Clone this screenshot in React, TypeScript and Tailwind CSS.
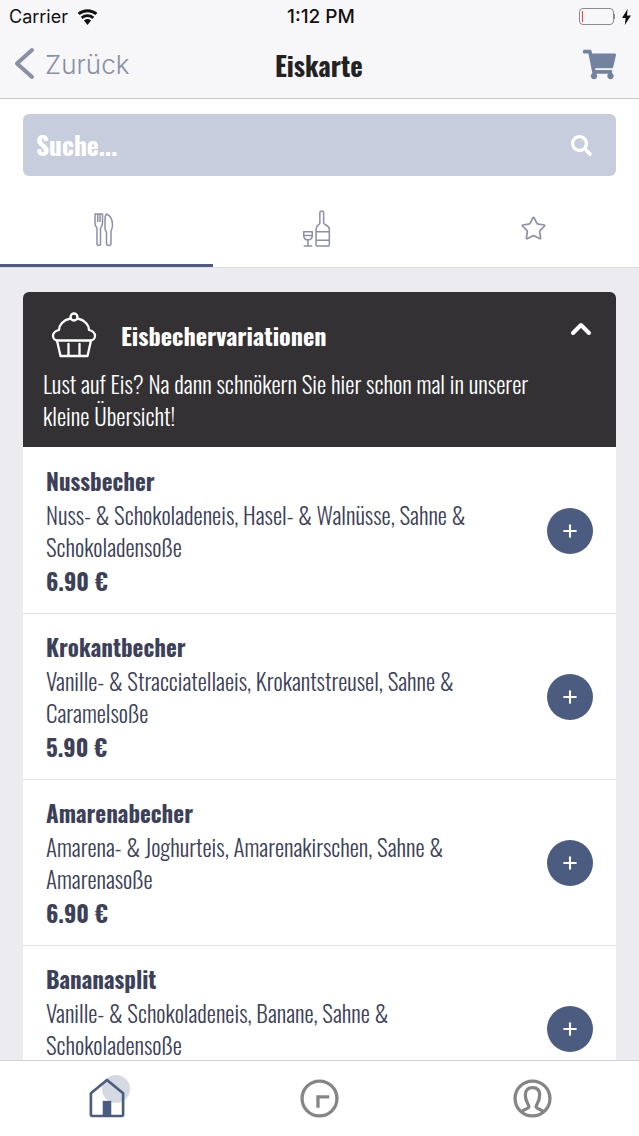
import { ChevronUp, Plus, Star } from "lucide-react";
import { FaSearch, FaShoppingCart } from "react-icons/fa";

const NARROW = "font-['Oswald','Liberation_Sans_Narrow','Liberation_Sans',sans-serif]";

const items = [
  { name: "Nussbecher", lines: ["Nuss- & Schokoladeneis, Hasel- & Walnüsse, Sahne &", "Schokoladensoße"], price: "6.90 €" },
  { name: "Krokantbecher", lines: ["Vanille- & Stracciatellaeis, Krokantstreusel, Sahne &", "Caramelsoße"], price: "5.90 €" },
  { name: "Amarenabecher", lines: ["Amarena- & Joghurteis, Amarenakirschen, Sahne &", "Amarenasoße"], price: "6.90 €" },
  { name: "Bananasplit", lines: ["Vanille- & Schokoladeneis, Banane, Sahne &", "Schokoladensoße"], price: "6.90 €" },
];

function StatusBar() {
  return (
    <div className="relative flex h-[33px] items-center justify-between pl-[9px] pr-[8px] font-['Inter',sans-serif] text-[18px] text-[#111]">
      <div className="flex items-center gap-[9px]">
        <span>Carrier</span>
        <svg width="21" height="16" viewBox="0 0 20 15" fill="#111">
          <path d="M10 15 6.6 10.8a5.4 5.4 0 0 1 6.8 0z" />
          <path d="M5.3 9.3 3.6 7.2a10 10 0 0 1 12.8 0l-1.700 2.100a7.400 7.400 0 0 0-9.400 0z" />
          <path d="M2.400 5.700.6 3.500a14.800 14.800 0 0 1 18.800 0l-1.800 2.200a12 12 0 0 0-15.200 0z" />
        </svg>
      </div>
      <span className="absolute left-[287px] top-[3px] text-[19px] font-medium">1:12 PM</span>
      <div className="flex items-center gap-[7px]">
        <div className="flex items-center">
          <div className="flex h-[17px] w-[35px] items-center rounded-[4px] border border-[#8b8b8b] pl-[2px]">
            <div className="h-[11px] w-[1.5px] bg-[#e0433a]" />
          </div>
          <div className="h-[5px] w-[1.5px] bg-[#8b8b8b]" />
        </div>
        <svg width="9" height="16" viewBox="0 0 9 16" fill="#111">
          <path d="M5.6 0 0 9h3.600L2.800 16 9 6.600H5z" />
        </svg>
      </div>
    </div>
  );
}

function NavBar() {
  return (
    <div className="relative flex h-[66px] items-center justify-between border-b border-[#c9c9cc] pb-[2px] pl-[14px] pr-[23px]">
      <div className="flex items-center gap-[10px] text-[#8a8fa6]">
        <svg width="21" height="33" viewBox="0 0 21 33" fill="none" stroke="currentColor" strokeWidth="4" strokeLinecap="round" strokeLinejoin="round" className="-mt-[2px]">
          <path d="M18 3 3 16.500 18 30" />
        </svg>
        <span className="font-['Inter',sans-serif] text-[26px] font-light leading-none">Zurück</span>
      </div>
      <span className={`absolute left-[275px] top-[14px] ${NARROW} text-[26.500px] font-bold leading-[36px] text-[#222]`}>Eiskarte</span>
      <FaShoppingCart size={33} className="text-[#73829f]" />
    </div>
  );
}

function ForkKnife() {
  return (
    <svg width="20" height="34" viewBox="0 0 20 34" fill="none" stroke="#8d8fa8" strokeWidth="1.500" strokeLinejoin="round">
      <path d="M1 1v9c0 3 1.200 4 2 5v15.500c0 2.600 3.500 2.600 3.500 0V15c.8-1 2-2 2-5V1H1zM3.700 1v8M6 1v8" />
      <path d="M12.500 1c3.800 1.500 6 6 6 11 0 3-1 5-1.500 6v12.500c0 2.600-4.500 2.600-4.500 0V19c-1-1-1.500-2-1.500-4V6c0-2 .5-4 1.500-5z" />
    </svg>
  );
}

function Bottle() {
  return (
    <svg width="30" height="37" viewBox="0 0 30 39" fill="none" stroke="#8d8fa8" strokeWidth="1.600" strokeLinejoin="round">
      <path d="M18 14V3c0-2.500 4-2.500 4 0v11c0 1.500 6 2 6 6v16.500c0 1-.6 1.500-1.500 1.500h-11c-.9 0-1.500-.5-1.500-1.500V20c0-4 4-4.500 4-6z" />
      <path d="M14 23h14M14 32h14" />
      <path d="M1 23h9v4c0 3-2 4.500-4.500 4.500S1 30 1 27zM1 27h9M5.500 31.500V37.500M1 38h9" />
    </svg>
  );
}

function Cupcake() {
  return (
    <svg width="46" height="46" viewBox="0 0 46 46" fill="none" stroke="#fff" strokeWidth="2.300" strokeLinejoin="round" strokeLinecap="round">
      <circle cx="23" cy="5" r="3.500" />
      <path d="M19.500 6.500C12 8 8 13 8 18c-4 1-6 3.500-6 6 0 2.500 2 4.500 5 4.500h32c3 0 5-2 5-4.500 0-2.500-2-5-6-6 0-5-4-10-11.500-11.500" />
      <path d="M6 28.500 9.500 44h27L40 28.500M17.500 32v12M28.500 32v12" />
    </svg>
  );
}

function HomeIcon() {
  return (
    <svg width="36" height="40" viewBox="0 0 38 42" fill="none" stroke="#4c5b80" strokeWidth="2.800" strokeLinejoin="round">
      <path d="M2 16 19 2l17 14v22.500c0 1-.8 1.500-1.500 1.500h-31C2.800 40 2 39.500 2 38.500z" />
      <rect x="14.500" y="24" width="9" height="16" fill="#4c5b80" stroke="none" />
    </svg>
  );
}

function ClockIcon() {
  return (
    <svg width="39" height="39" viewBox="0 0 38 38" fill="none" stroke="#858585" strokeWidth="3.200">
      <circle cx="19" cy="19" r="17" />
      <path d="M17.500 28V17.500h11" />
    </svg>
  );
}

function UserIcon() {
  return (
    <svg width="39" height="39" viewBox="0 0 38 38" fill="none" stroke="#858585" strokeWidth="3.200" strokeLinejoin="round">
      <circle cx="19" cy="19" r="17" />
      <path d="M15.500 27c0-2-3.500-5-3.500-11.500 0-4.500 2.500-7 7-7s7 2.500 7 7c0 6.500-3.500 9.500-3.500 11.500 0 2 5 2.500 7.500 5M15.500 27c0 2-5 2.500-7.500 5" />
    </svg>
  );
}

export default function App() {
  return (
    <div className="flex h-[1136px] w-[639px] flex-col overflow-hidden bg-[#ebebf0]">
      <header className="bg-[#f7f6f9]">
        <StatusBar />
        <NavBar />
      </header>

      <div className="bg-white px-[23px] pt-[15px]">
        <div className={`flex h-[62px] items-center justify-between rounded-[6px] bg-[#c7cddc] pl-[13px] pr-[24px] ${NARROW} text-[25.500px] font-bold text-white`}>
          <span>Suche...</span>
          <FaSearch size={21} />
        </div>
      </div>

      <nav className="grid h-[92px] grid-cols-3 border-b border-[#dedee2] bg-white">
        <div className="flex items-center justify-center border-b-[3px] border-[#4c5b80] pr-[5px] pt-[19px]">
          <ForkKnife />
        </div>
        <div className="flex items-center justify-center pb-[2px] pr-[6px] pt-[15px]">
          <Bottle />
        </div>
        <div className="flex items-center justify-center pl-[2px] pt-[13px]">
          <Star size={27} strokeWidth={1.500} className="text-[#8d8fa8]" />
        </div>
      </nav>

      <main className="min-h-0 flex-1 overflow-hidden px-[23px] pt-[24px]">
        <section className="h-[155px] rounded-t-[6px] bg-[#333133] pl-[20px] pr-[23px] pt-[20px] text-white">
          <div className="flex items-center justify-between">
            <div className="flex items-center gap-[24px] pl-[8px]">
              <Cupcake />
              <span className={`${NARROW} text-[24.200px] font-bold`}>Eisbechervariationen</span>
            </div>
            <ChevronUp size={32} strokeWidth={3} className="-mr-[4px] -mt-[12px]" />
          </div>
          <p className={`mt-[10px] ${NARROW} text-[23.200px] font-light leading-[32px]`}>
            Lust auf Eis? Na dann schnökern Sie hier schon mal in unserer
            <br />
            kleine Übersicht!
          </p>
        </section>

        <div className="bg-white pt-[1px]">
          {items.map((item) => (
            <article key={item.name} className="flex h-[166px] shrink-0 items-center justify-between border-b border-[#e3e3e6] px-[23px] text-[#3c4058]">
              <div className={NARROW}>
                <h3 className="text-[23px] font-bold leading-[36px]">{item.name}</h3>
                <p className="text-[23px] font-light leading-[32px]">
                  {item.lines[0]}
                  <br />
                  {item.lines[1]}
                </p>
                <p className="text-[23px] font-bold leading-[36px]">{item.price}</p>
              </div>
              <button className="flex h-[46px] w-[46px] items-center justify-center rounded-full bg-[#4c5b80] text-white">
                <Plus size={20} strokeWidth={2.500} />
              </button>
            </article>
          ))}
        </div>
      </main>

      <footer className="relative z-10 grid h-[76px] shrink-0 grid-cols-3 border-t border-[#d2d2d5] bg-white">
        <div className="relative flex items-center justify-center pb-[2px]">
          <div className="absolute left-[102px] top-[14px] h-[28px] w-[28px] rounded-full bg-[#d5d9e1]" />
          <div className="relative"><HomeIcon /></div>
        </div>
        <div className="flex items-center justify-center">
          <ClockIcon />
        </div>
        <div className="flex items-center justify-center">
          <UserIcon />
        </div>
      </footer>
    </div>
  );
}
